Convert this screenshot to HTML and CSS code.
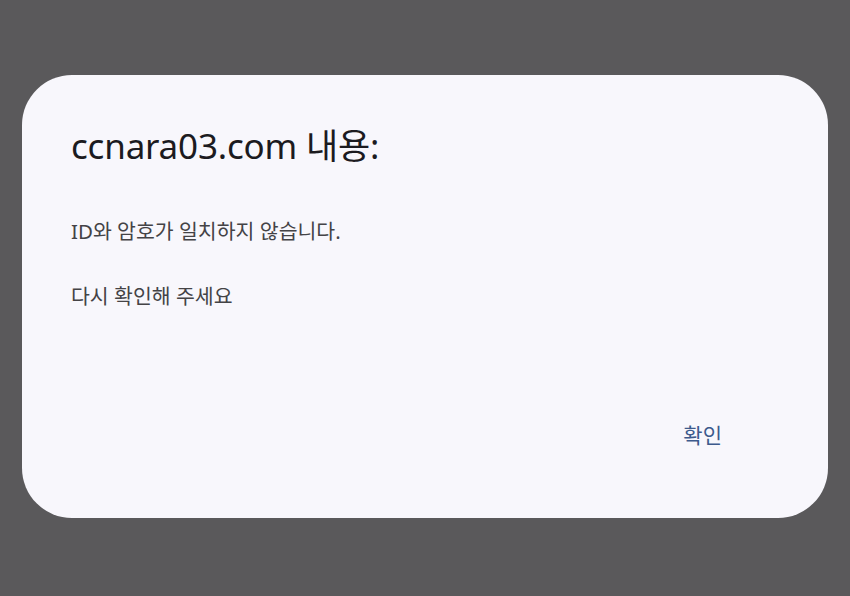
FILE: index.html
```html
<!DOCTYPE html>
<html lang="ko">
<head>
    <meta charset="UTF-8">
    <meta name="viewport" content="width=device-width, initial-scale=1.0">
    <title>ccnara03.com 내용</title>
    <link rel="stylesheet" href="styles.css">
</head>
<body>
    <div class="overlay">
        <div class="dialog">
            <h1 class="dialog-title">ccnara03.com 내용:</h1>
            <div class="dialog-message">
                <p>ID와 암호가 일치하지 않습니다.</p>
                <p>다시 확인해 주세요</p>
            </div>
            <div class="dialog-actions">
                <button class="dialog-button">확인</button>
            </div>
        </div>
    </div>
</body>
</html>
```

FILE: styles.css
```css
html, body {
    margin: 0;
    padding: 0;
    height: 100%;
}
body {
    background-color: #5a595b;
    font-family: "Noto Sans", "Noto Sans CJK KR", sans-serif;
}
.overlay {
    height: 100%;
    padding: 75px 22px 0;
    box-sizing: border-box;
}
.dialog {
    background-color: #f8f7fc;
    border-radius: 50px;
    height: 443px;
    box-sizing: border-box;
    padding: 45px 49px 0;
    display: flex;
    flex-direction: column;
}
.dialog-title {
    margin: 0;
    font-size: 35px;
    font-weight: 400;
    color: #1c1b1f;
    line-height: 52px;
    letter-spacing: -0.2px;
}
.dialog-message {
    margin-top: 44px;
    color: #444346;
    font-size: 20.5px;
}
.dialog-message p {
    margin: 0 0 35px;
    line-height: 30px;
}
.dialog-actions {
    display: flex;
    justify-content: flex-end;
    margin-top: 74px;
}
.dialog-button {
    background: none;
    border: none;
    padding: 0;
    margin-right: 57px;
    font-family: inherit;
    font-size: 21px;
    line-height: 30px;
    color: #3d5a8c;
    cursor: pointer;
}
```
